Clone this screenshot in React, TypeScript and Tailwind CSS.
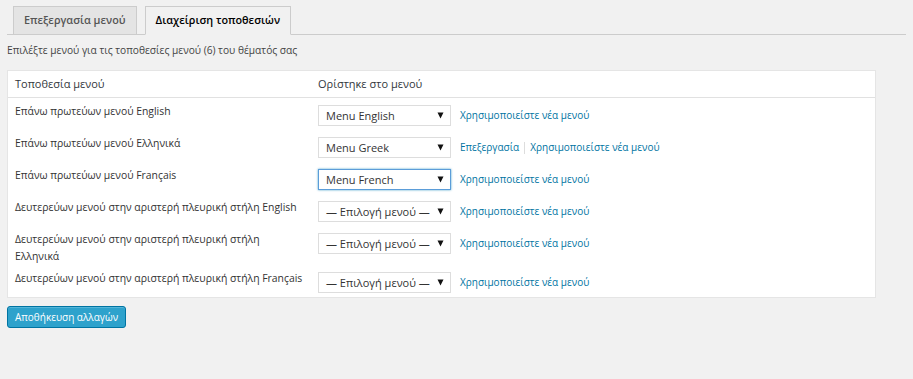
import React from "react";

type Row = {
  label: string;
  value: string;
  edit?: boolean;
  focused?: boolean;
};

const rows: Row[] = [
  { label: "Επάνω πρωτεύων μενού English", value: "Menu English" },
  { label: "Επάνω πρωτεύων μενού Ελληνικά", value: "Menu Greek", edit: true },
  { label: "Επάνω πρωτεύων μενού Français", value: "Menu French", focused: true },
  { label: "Δευτερεύων μενού στην αριστερή πλευρική στήλη English", value: "— Επιλογή μενού —" },
  { label: "Δευτερεύων μενού στην αριστερή πλευρική στήλη Ελληνικά", value: "— Επιλογή μενού —" },
  { label: "Δευτερεύων μενού στην αριστερή πλευρική στήλη Français", value: "— Επιλογή μενού —" },
];

const Arrow = () => (
  <svg width="7" height="7" viewBox="0 0 7 7" className="shrink-0">
    <polygon points="0.5,0.5 6.5,0.5 3.5,6.5" fill="#111" />
  </svg>
);

const Select = ({ value, focused }: { value: string; focused?: boolean }) => (
  <div
    className={
      "flex h-[21px] w-[133px] shrink-0 items-center justify-between bg-white pl-[7px] pr-[6px] text-[11px] text-[#333] " +
      (focused
        ? "border border-[#5b9dd9] shadow-[0_0_2px_rgba(30,140,190,0.8)]"
        : "border border-[#ddd]")
    }
  >
    <span className="whitespace-nowrap leading-none">{value}</span>
    <Arrow />
  </div>
);

export default function App() {
  return (
    <div
      className="min-h-[379px] w-full bg-[#f1f1f1] text-[#444]"
      style={{ fontFamily: '"Open Sans", "Noto Sans", sans-serif' }}
    >
      {/* Tabs */}
      <div className="mx-[7px] flex gap-[8px] border-b border-[#ccc] pl-[6px] pt-[6px]">
        <div className="-mb-px flex h-[29px] items-center border border-[#ccc] bg-[#e4e4e4] px-[10px] text-[10.8px] font-semibold text-[#555]">
          Επεξεργασία μενού
        </div>
        <div className="-mb-px flex h-[29px] items-center border border-[#ccc] border-b-[#f1f1f1] bg-[#f1f1f1] px-[10px] text-[10.8px] font-semibold text-black">
          Διαχείριση τοποθεσιών
        </div>
      </div>

      <p className="mx-[7px] mt-[8px] text-[10.2px] leading-[15px] text-[#444]">
        Επιλέξτε μενού για τις τοποθεσίες μενού (6) του θέματός σας
      </p>

      {/* Table */}
      <div className="ml-[7px] mt-[12px] w-[869px] border border-[#e5e5e5] bg-white">
        <div className="flex h-[27px] items-center border-b border-[#e1e1e1] text-[11px] text-[#32373c]">
          <div className="w-[310px] pl-[7px]">Τοποθεσία μενού</div>
          <div>Ορίστηκε στο μενού</div>
        </div>
        {rows.map((r) => (
          <div key={r.label} className="flex min-h-[32px]">
            <div className="w-[310px] shrink-0 pl-[7px] pr-[12px] pt-[5px] text-[10.4px] leading-[17px] text-[#333]">
              {r.label}
            </div>
            <div className="flex items-start pt-[7px]">
              <Select value={r.value} focused={r.focused} />
              <div className="ml-[9px] flex h-[21px] items-center whitespace-nowrap text-[10px] text-[#0074a2]">
                {r.edit && (
                  <>
                    <span>Επεξεργασία</span>
                    <span className="mx-[5px] h-[12px] w-px bg-[#ddd]" />
                  </>
                )}
                <span>Χρησιμοποιείστε νέα μενού</span>
              </div>
            </div>
          </div>
        ))}
      </div>

      <button className="ml-[7px] mt-[8px] flex h-[22px] items-center rounded-[3px] border border-[#0074a2] bg-[#2ea2cc] px-[7px] text-[10px] text-white shadow-[inset_0_1px_0_rgba(120,200,230,0.5)]">
        Αποθήκευση αλλαγών
      </button>
    </div>
  );
}
